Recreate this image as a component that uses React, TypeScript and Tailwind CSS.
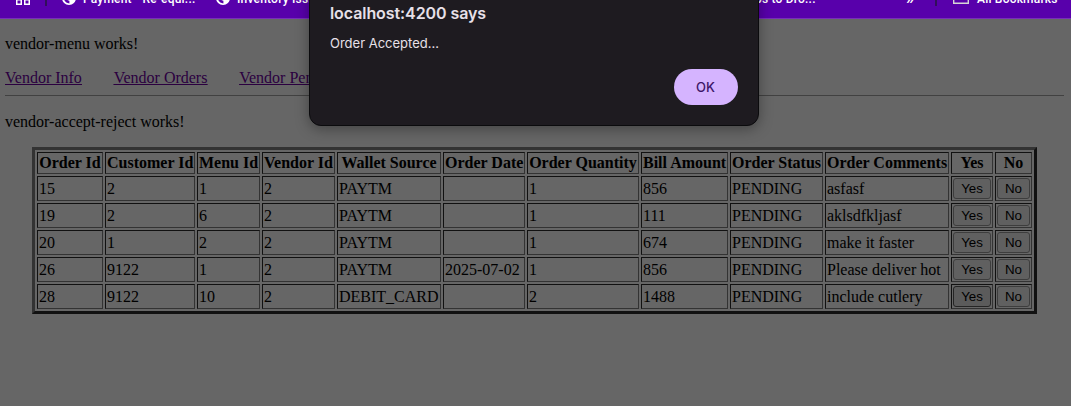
import type { ReactNode } from "react";

const columns = [
  { label: "Order Id", width: 66 },
  { label: "Customer Id", width: 90 },
  { label: "Menu Id", width: 63 },
  { label: "Vendor Id", width: 73 },
  { label: "Wallet Source", width: 104 },
  { label: "Order Date", width: 82 },
  { label: "Order Quantity", width: 112 },
  { label: "Bill Amount", width: 87 },
  { label: "Order Status", width: 93 },
  { label: "Order Comments", width: 124 },
  { label: "Yes", width: 42 },
  { label: "No", width: 37 },
];

const orders = [
  ["15", "2", "1", "2", "PAYTM", "", "1", "856", "PENDING", "asfasf"],
  ["19", "2", "6", "2", "PAYTM", "", "1", "111", "PENDING", "aklsdfkljasf"],
  ["20", "1", "2", "2", "PAYTM", "", "1", "674", "PENDING", "make it faster"],
  ["26", "9122", "1", "2", "PAYTM", "2025-07-02", "1", "856", "PENDING", "Please deliver hot"],
  ["28", "9122", "10", "2", "DEBIT_CARD", "", "2", "1488", "PENDING", "include cutlery"],
];

const cell =
  "border border-t-[#111] border-l-[#111] border-r-[#333] border-b-[#333] p-px whitespace-nowrap";

function ActionButton({ active, children }: { active?: boolean; children: ReactNode }) {
  return (
    <button
      className={`block h-[21px] w-full rounded-[3px] border text-center font-['Liberation_Sans',sans-serif] text-[13.333px] leading-[19px] ${
        active ? "border-[#252525] bg-[#5b5b5b]" : "border-[#3d3d3d] bg-[#606060]"
      }`}
    >
      {children}
    </button>
  );
}

function Globe() {
  return (
    <svg className="h-[14px] w-[14px] shrink-0" viewBox="0 0 14 14">
      <circle cx="7" cy="7" r="7" fill="#fff" />
      <path d="M1.8 6.4 5.7 8v1.2l1.7.6v2.6C4.2 12.3 1.6 9.8 1.8 6.4ZM7 2h3.2L12 5v2.6L10.4 9 8.6 7.4H6.2L5.4 5.6 7 5Z" fill="#5800ab" />
    </svg>
  );
}

function BookmarksBar() {
  return (
    <div className="h-[19px] overflow-hidden border-b border-[#782fb9] bg-[#5800ab] font-[Roboto,sans-serif] text-[12px] font-medium text-white">
      <div className="-mt-[10px] flex h-4 items-center whitespace-nowrap leading-4">
        <svg className="ml-4 -mt-px h-[14px] w-[14px]" viewBox="0 0 14 14" fill="none" stroke="#fff" strokeWidth="1.5">
          <path d="M.75.75h4.5v4.5H.75zM8.75.75h4.5v4.5h-4.5zM.75 8.75h4.5v4.5H.75zM8.75 8.75h4.5v4.5h-4.5z" />
        </svg>
        <span className="ml-[15px] h-4 w-[2px] bg-[#31105a]" />
        <span className="ml-[15px]"><Globe /></span>
        <span className="mt-px ml-[7px] w-[126px] pt-px tracking-[0.2px]">Payment - Re-equi...</span>
        <span className="ml-[7px]"><Globe /></span>
        <span className="mt-px ml-[7px] w-[518px] pt-px tracking-[0.2px]">Inventory Iss...</span>
        <span className="mt-px w-[72px] pt-px tracking-[0.2px]">ps to Dro...</span>
        <span className="ml-[79px] w-[12px] text-[17px] leading-4">»</span>
        <span className="ml-[17px] h-4 w-[2px] bg-[#31105a]" />
        <svg className="ml-4 -mt-[2px] h-[14px] w-4" viewBox="0 0 16 14" fill="none" stroke="#d5d5d5" strokeWidth="1.4">
          <path d="M.7 1h5l1.5 2h8.1v10.3H.7z" />
        </svg>
        <span className="mt-px ml-2 pt-px tracking-[0.2px]">All Bookmarks</span>
      </div>
    </div>
  );
}

export default function App() {
  return (
    <div className="relative h-[406px] w-[1071px] overflow-hidden bg-[#666] font-['Liberation_Serif',serif] text-[16px] leading-[18px] text-black">
      <BookmarksBar />
      <main className="pr-[7px] pl-[5px] pt-4">
        <p>vendor-menu works!</p>
        <nav className="mt-4 flex gap-[31.8px] text-[#2b0040] underline">
          <a>Vendor Info</a>
          <a>Vendor Orders</a>
          <a>Vendor Pending Orders</a>
        </nav>
        <hr className="mt-2 border-t border-[#414141]" />
        <p className="mt-[17px]">vendor-accept-reject works!</p>
        <table className="mt-4 ml-[27px] w-[1005px] table-fixed border-separate border-spacing-[2px] border-[3px] border-t-[#333] border-l-[#333] border-r-[#111] border-b-[#111]">
          <colgroup>
            {columns.map((c) => (
              <col key={c.label} style={{ width: c.width }} />
            ))}
          </colgroup>
          <thead>
            <tr>
              {columns.map((c) => (
                <th key={c.label} className={`${cell} h-[22px] text-center font-bold`}>{c.label}</th>
              ))}
            </tr>
          </thead>
          <tbody>
            {orders.map((row, i) => (
              <tr key={row[0]}>
                {row.map((value, j) => (
                  <td key={j} className={`${cell} h-[25px] align-middle`}>{value}</td>
                ))}
                <td className={cell}><ActionButton active={i === 4}>Yes</ActionButton></td>
                <td className={cell}><ActionButton>No</ActionButton></td>
              </tr>
            ))}
          </tbody>
        </table>
      </main>
      <div
        role="alertdialog"
        className="absolute top-[-20px] left-[309px] flex h-[146px] w-[450px] flex-col rounded-[12px] border border-[#0b0b0d] bg-[#1e1b20] px-5 pt-[22px] font-[Inter,sans-serif] text-[#e7e0e8] shadow-[0_3px_14px_rgba(0,0,0,0.35)]"
      >
        <h1 className="text-[16px] leading-5 font-semibold tracking-[-0.08px]">localhost:4200 says</h1>
        <p className="mt-[10px] text-[13px] leading-5">Order Accepted...</p>
        <button className="mt-4 h-9 w-16 self-end rounded-full bg-[#d5b4ff] pr-px text-[13px] font-medium text-[#3d1668]">OK</button>
      </div>
    </div>
  );
}
